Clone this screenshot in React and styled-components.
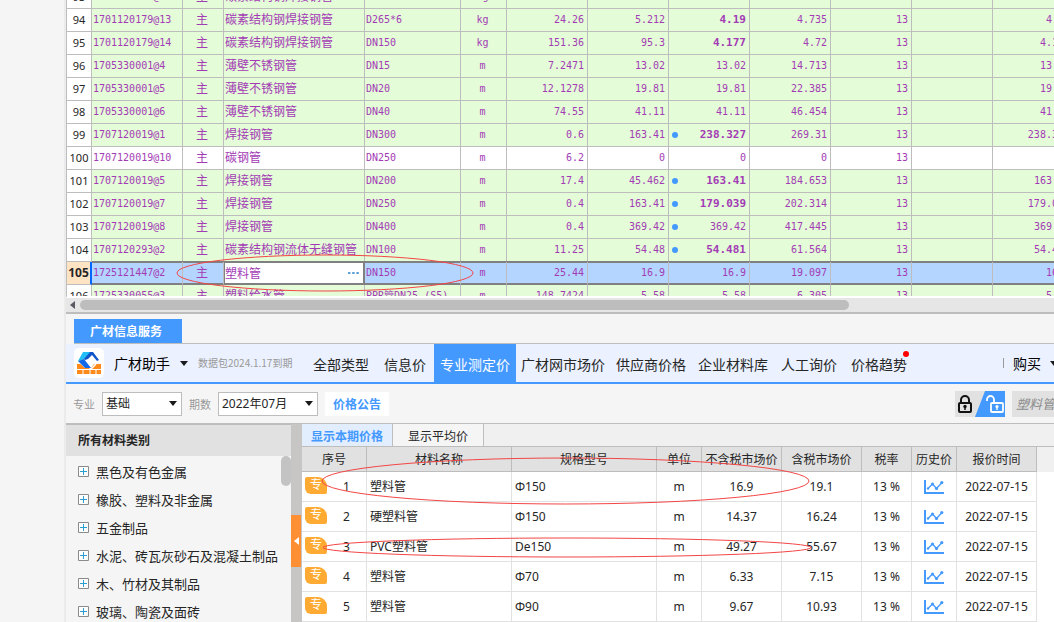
import { useState } from 'react'
import styled, { createGlobalStyle, ThemeProvider, css } from 'styled-components'

const theme = {
  color: {
    blue: '#4499ff',
    line: '#bdbdbd',
    lightLine: '#e1e1e1',
    page: '#f5f5f5',
    panel: '#e1e1e1',
    header: '#ebf1ff',
    green: '#e4fdd8',
    selected: '#b3d5ff',
    focus: '#808080',
    purple: '#a33bb5',
    orange: '#ff8f33',
    badge: '#ffaa33',
    text: '#262626',
    muted: '#999999',
    white: '#ffffff',
  },
  font: {
    ui: "'Noto Sans', 'Noto Sans CJK SC', sans-serif",
    cjk: "'Noto Sans CJK SC', sans-serif",
    mono: "'DejaVu Sans Mono', 'Noto Sans CJK SC', monospace",
  },
}

const GlobalStyle = createGlobalStyle`
  * {
    box-sizing: border-box;
  }

  body {
    margin: 0;
    overflow: hidden;
    font-family: ${theme.font.ui};
    font-size: 12px;
    color: ${theme.color.text};
    background: ${theme.color.page};
  }

  button, input, select {
    margin: 0;
    padding: 0;
    border: 0;
    border-radius: 0;
    background: none;
    font: inherit;
    color: inherit;
  }

  a {
    color: inherit;
    text-decoration: none;
  }
`

const Page = styled.div`
  display: flex;
  height: 100vh;
`

const Gutter = styled.aside`
  flex: 0 0 66px;
  border-right: 2px solid #ebebeb;
`

const Main = styled.main`
  flex: 1;
  min-width: 0;
  display: flex;
  flex-direction: column;
`

/* material sheet */

const SheetPane = styled.section`
  flex: 0 0 314px;
  min-height: 0;
  display: flex;
  flex-direction: column;
  overflow: hidden;
  border-bottom: 2px solid ${({ theme }) => theme.color.line};
`

const SheetView = styled.div`
  flex: 1 1 0;
  min-height: 0;
  overflow: hidden;
  border-left: 1px solid ${({ theme }) => theme.color.line};
  border-bottom: 2px solid ${({ theme }) => theme.color.white};
`

const Sheet = styled.table`
  width: 1007px;
  margin-top: -14px;
  table-layout: fixed;
  border-collapse: separate;
  border-spacing: 0;
`

const SheetRow = styled.tr`
  background: ${({ theme, $plain }) =>
    $plain ? theme.color.white : theme.color.green};

  ${({ theme, $selected }) =>
    $selected &&
    css`
      background: ${theme.color.selected};

      td {
        border-bottom-color: ${theme.color.focus};
        box-shadow: 0 -1px 0 ${theme.color.focus},
          inset 0 1px 0 ${theme.color.focus},
          inset 0 -1px 0 ${theme.color.focus};
      }
    `}
`

const RowHead = styled.th`
  height: 23px;
  padding: 0;
  border-right: 1px solid ${({ theme }) => theme.color.line};
  border-bottom: 1px solid ${({ theme }) => theme.color.line};
  background: ${({ theme }) => theme.color.white};
  font-size: 11px;
  line-height: 20px;
  font-weight: 400;

  ${({ $selected }) =>
    $selected &&
    css`
      border-right: 2px solid #0066ff;
      background: #ffe4c4;
      font-size: 12px;
      font-weight: 700;
    `}
`

const SheetCell = styled.td`
  height: 23px;
  padding: ${({ $cjk }) => ($cjk ? '0 3px 2px 1px' : '0 3px 0 1px')};
  overflow: hidden;
  border-right: 1px solid ${({ theme }) => theme.color.line};
  border-bottom: 1px solid ${({ theme }) => theme.color.line};
  color: ${({ theme }) => theme.color.purple};
  font-family: ${({ theme, $cjk }) => ($cjk ? theme.font.cjk : theme.font.mono)};
  font-size: ${({ $cjk }) => ($cjk ? '12px' : '10px')};
  line-height: 20px;
  text-align: ${({ $align }) => $align || 'left'};
  white-space: nowrap;
`

const Price = styled.div`
  display: flex;
  align-items: center;
  justify-content: space-between;
  padding-left: 2px;
`

const PriceValue = styled.span`
  margin-left: auto;
  font-size: ${({ $bold }) => ($bold ? '11px' : '10px')};
  font-weight: ${({ $bold }) => ($bold ? 700 : 400)};
`

const PriceDot = styled.i`
  width: 6px;
  height: 6px;
  border-radius: 50%;
  background: ${({ theme }) => theme.color.blue};
`

const EditCell = styled(SheetCell)`
  padding: 0;
  border-right-color: ${({ theme }) => theme.color.focus};
`

const Editor = styled.div`
  display: flex;
  align-items: center;
  height: 22px;
  padding: 0 4px 0 0;
  border: 1px solid ${({ theme }) => theme.color.focus};
  background: ${({ theme }) => theme.color.white};

  input {
    flex: 1;
    min-width: 0;
    height: 18px;
    outline: none;
  }

  button {
    display: flex;
  }
`

const ScrollTrack = styled.div`
  flex: 0 0 14px;
  display: flex;
  align-items: center;
  gap: 5px;
  padding-left: 4px;
  background: #e6e6e6;
`

const ScrollArea = styled.div`
  flex: 1;
`

const ScrollThumb = styled.div`
  width: 79%;
  height: 10px;
  border-radius: 5px;
  background: ${({ theme }) => theme.color.line};
`

/* price service */

const ServicePane = styled.section`
  flex: 1;
  min-height: 0;
  display: flex;
  flex-direction: column;
`

const TabStrip = styled.div`
  flex: none;
  display: flex;
  align-items: flex-end;
  height: 30px;
  margin-left: 8px;
  border-bottom: 1px solid ${({ theme }) => theme.color.line};
`

const ServiceTab = styled.button`
  height: 24px;
  padding: 0 20px 0 16px;
  background: ${({ theme }) => theme.color.blue};
  color: ${({ theme }) => theme.color.white};
  font-weight: 700;
`

const Header = styled.header`
  flex: none;
  display: flex;
  align-items: center;
  height: 40px;
  padding-left: 8px;
  border-bottom: 2px solid ${({ theme }) => theme.color.blue};
  background: ${({ theme }) => theme.color.header};
  white-space: nowrap;
`

const Brand = styled.button`
  display: flex;
  align-items: center;
  gap: 10px;
  color: #000;
  font-family: ${({ theme }) => theme.font.cjk};
  font-size: 14px;
`

const Expiry = styled.span`
  width: 108px;
  padding: 0 0 2px 10px;
  color: ${({ theme }) => theme.color.muted};
  font-family: ${({ theme }) => theme.font.cjk};
  font-size: 10px;
`

const Nav = styled.nav`
  display: flex;
  align-self: stretch;
  margin-left: 10px;
`

const NavLink = styled.a`
  position: relative;
  display: flex;
  align-items: center;
  justify-content: center;
  width: ${({ $chars }) => $chars * 12 + 22}px;
  padding-top: 2px;
  font-family: ${({ theme }) => theme.font.cjk};
  font-size: 14px;

  ${({ theme, $active }) =>
    $active &&
    css`
      background: ${theme.color.blue};
      color: ${theme.color.white};
    `}
`

const NewDot = styled.i`
  position: absolute;
  top: 7px;
  right: 5px;
  width: 6px;
  height: 6px;
  border-radius: 50%;
  background: #ff0000;
`

const Buy = styled.button`
  flex: none;
  display: flex;
  align-items: center;
  gap: 9px;
  margin-left: auto;
  margin-right: -4px;
  color: #000;
  font-family: ${({ theme }) => theme.font.cjk};
  font-size: 14px;

  &::before {
    content: '';
    height: 10px;
    border-left: 1px solid ${({ theme }) => theme.color.muted};
  }
`

const Filters = styled.div`
  flex: none;
  display: flex;
  align-items: center;
  height: 39px;
  padding-left: 7px;
`

const FilterLabel = styled.label`
  width: 29px;
  color: ${({ theme }) => theme.color.muted};
  font-size: 11px;
`

const SelectBox = styled.span`
  display: grid;
  align-items: center;
  width: ${({ $width }) => $width}px;
  height: 24px;
  margin-right: 7px;
  border: 1px solid ${({ theme }) => theme.color.line};
  background: ${({ theme }) => theme.color.white};

  select {
    grid-area: 1 / 1;
    height: 22px;
    padding-left: 3px;
    appearance: none;
    outline: none;
  }

  svg {
    grid-area: 1 / 1;
    justify-self: end;
    margin-right: 4px;
    pointer-events: none;
  }
`

const NoticeButton = styled.button`
  height: 24px;
  padding: 0 8px;
  background: ${({ theme }) => theme.color.white};
  color: ${({ theme }) => theme.color.blue};
  font-weight: 700;
`

const LockSwitch = styled.button`
  display: flex;
  margin: 0 7px 0 auto;
`

const Search = styled.input`
  width: 42px;
  height: 26px;
  padding-left: 4px;
  background: ${({ theme }) => theme.color.panel};
  font-size: 13px;
  font-style: italic;

  &::placeholder {
    color: #8c8c8c;
    opacity: 1;
  }
`

const Workspace = styled.div`
  flex: 1;
  min-height: 0;
  display: flex;
  border-top: 1px solid ${({ theme }) => theme.color.line};
  overflow: hidden;
`

const Sidebar = styled.aside`
  flex: 0 0 225px;
  display: flex;
  flex-direction: column;
  border-top: 1px solid ${({ theme }) => theme.color.line};
`

const SidebarTitle = styled.h2`
  flex: none;
  margin: 0;
  padding-left: 12px;
  background: ${({ theme }) => theme.color.panel};
  font-size: 12px;
  line-height: 31px;
`

const SidebarBody = styled.div`
  display: flex;
  justify-content: space-between;
`

const Tree = styled.ul`
  margin: 0;
  padding: 1px 0 0 12px;
  list-style: none;
`

const TreeItem = styled.li`
  button {
    display: flex;
    align-items: center;
    gap: 7px;
    height: 28px;
    font-size: 13px;
    white-space: nowrap;
  }
`

const SidebarThumb = styled.div`
  width: 10px;
  height: 30px;
  border-radius: 5px;
  background: #c3c3c3;
`

const Splitter = styled.div`
  flex: 0 0 11px;
  display: flex;
  align-items: center;
  background: #c8c6c4;
`

const Collapse = styled.button`
  display: flex;
  align-items: center;
  justify-content: center;
  width: 10px;
  height: 52px;
  margin-top: 36px;
  background: ${({ theme }) => theme.color.orange};
`

const Results = styled.div`
  flex: 1;
  min-width: 0;
  display: flex;
  flex-direction: column;
  background: ${({ theme }) => theme.color.white};
`

const ResultTabs = styled.div`
  flex: none;
  display: flex;
  height: 23px;
  border-bottom: 1px solid ${({ theme }) => theme.color.line};
  background: #f0f0f0;
`

const ResultTab = styled.button`
  width: 91px;
  padding-top: 1px;
  border-right: 1px solid ${({ theme }) => theme.color.line};
  background: ${({ theme, $active }) => ($active ? '#e2eefe' : theme.color.page)};
  color: ${({ theme, $active }) => ($active ? theme.color.blue : 'inherit')};
  font-weight: ${({ $active }) => ($active ? 700 : 400)};
`

const PriceArea = styled.div`
  background: linear-gradient(#f0f0f0 25px, #ffffff 25px);
`

const PriceTable = styled.table`
  width: 735px;
  table-layout: fixed;
  border-collapse: separate;
  border-spacing: 0;
  white-space: nowrap;

  th {
    height: 25px;
    padding: 2px 0 0;
    border-right: 1px solid ${({ theme }) => theme.color.line};
    border-bottom: 1px solid ${({ theme }) => theme.color.line};
    background: ${({ theme }) => theme.color.panel};
    font-weight: 400;
    line-height: 20px;
  }

  td {
    height: 30px;
    padding: 0 3px;
    border-right: 1px solid ${({ theme }) => theme.color.lightLine};
    border-bottom: 1px solid ${({ theme }) => theme.color.lightLine};
    background: ${({ theme }) => theme.color.white};
    line-height: 20px;
    text-align: center;
  }
`

const TextCell = styled.td`
  && {
    text-align: left;
  }
`

const OrderCell = styled.td`
  && {
    padding: 0 0 0 3px;
  }
`

const Order = styled.div`
  display: flex;
  align-items: center;
`

const OrderNumber = styled.span`
  flex: 1;
`

const Badge = styled.span`
  width: 22px;
  height: 17px;
  margin-bottom: 3px;
  border-radius: 2px 9px 2px 6px;
  background: ${({ theme }) => theme.color.badge};
  color: ${({ theme }) => theme.color.white};
  font-size: 12px;
  line-height: 16px;
`

const IconButton = styled.button`
  display: inline-flex;
  vertical-align: middle;
`

const Marks = styled.svg`
  position: absolute;
  top: 0;
  left: 0;
  pointer-events: none;
`

const sheetCols = [25, 91, 41, 141, 96, 46, 81, 81, 81, 81, 81, 81, 81]

const sheetRows = [
  { no: 93, code: '1701120179@12', name: '碳素结构钢焊接钢管', spec: 'DN100', unit: 'kg', qty: '3.2', budget: '5.2', price: '4.19', taxed: '4.735' },
  { no: 94, code: '1701120179@13', name: '碳素结构钢焊接钢管', spec: 'D265*6', unit: 'kg', qty: '24.26', budget: '5.212', price: '4.19', taxed: '4.735', bold: true },
  { no: 95, code: '1701120179@14', name: '碳素结构钢焊接钢管', spec: 'DN150', unit: 'kg', qty: '151.36', budget: '95.3', price: '4.177', taxed: '4.72', bold: true },
  { no: 96, code: '1705330001@4', name: '薄壁不锈钢管', spec: 'DN15', unit: 'm', qty: '7.2471', budget: '13.02', price: '13.02', taxed: '14.713' },
  { no: 97, code: '1705330001@5', name: '薄壁不锈钢管', spec: 'DN20', unit: 'm', qty: '12.1278', budget: '19.81', price: '19.81', taxed: '22.385' },
  { no: 98, code: '1705330001@6', name: '薄壁不锈钢管', spec: 'DN40', unit: 'm', qty: '74.55', budget: '41.11', price: '41.11', taxed: '46.454' },
  { no: 99, code: '1707120019@1', name: '焊接钢管', spec: 'DN300', unit: 'm', qty: '0.6', budget: '163.41', price: '238.327', taxed: '269.31', bold: true, dot: true },
  { no: 100, code: '1707120019@10', name: '碳钢管', spec: 'DN250', unit: 'm', qty: '6.2', budget: '0', price: '0', taxed: '0', plain: true },
  { no: 101, code: '1707120019@5', name: '焊接钢管', spec: 'DN200', unit: 'm', qty: '17.4', budget: '45.462', price: '163.41', taxed: '184.653', bold: true, dot: true },
  { no: 102, code: '1707120019@7', name: '焊接钢管', spec: 'DN250', unit: 'm', qty: '0.4', budget: '163.41', price: '179.039', taxed: '202.314', bold: true, dot: true },
  { no: 103, code: '1707120019@8', name: '焊接钢管', spec: 'DN400', unit: 'm', qty: '0.4', budget: '369.42', price: '369.42', taxed: '417.445', dot: true },
  { no: 104, code: '1707120293@2', name: '碳素结构钢流体无缝钢管', spec: 'DN100', unit: 'm', qty: '11.25', budget: '54.48', price: '54.481', taxed: '61.564', bold: true, dot: true },
  { no: 105, code: '1725121447@2', name: '塑料管', spec: 'DN150', unit: 'm', qty: '25.44', budget: '16.9', price: '16.9', taxed: '19.097', selected: true },
  { no: 106, code: '1725330055@3', name: '塑料给水管', spec: 'PPR管DN25 (S5)', unit: 'm', qty: '148.7424', budget: '5.58', price: '5.58', taxed: '6.305' },
]

const navItems = [
  '全部类型',
  '信息价',
  '专业测定价',
  '广材网市场价',
  '供应商价格',
  '企业材料库',
  '人工询价',
  '价格趋势',
]

const categories = [
  '黑色及有色金属',
  '橡胶、塑料及非金属',
  '五金制品',
  '水泥、砖瓦灰砂石及混凝土制品',
  '木、竹材及其制品',
  '玻璃、陶瓷及面砖',
]

const priceCols = [
  ['序号', 65],
  ['材料名称', 145],
  ['规格型号', 145],
  ['单位', 45],
  ['不含税市场价', 80],
  ['含税市场价', 80],
  ['税率', 50],
  ['历史价', 45],
  ['报价时间', 80],
]

const prices = [
  ['塑料管', 'Φ150', '16.9', '19.1'],
  ['硬塑料管', 'Φ150', '14.37', '16.24'],
  ['PVC塑料管', 'De150', '49.27', '55.67'],
  ['塑料管', 'Φ70', '6.33', '7.15'],
  ['塑料管', 'Φ90', '9.67', '10.93'],
]

const Caret = () => (
  <svg width='8' height='5' viewBox='0 0 8 5'>
    <path d='M0 0h8L4 5z' fill='#1a1a1a' />
  </svg>
)

const LeftArrow = ({ width, height, color }) => (
  <svg width={width} height={height} viewBox='0 0 5 8' preserveAspectRatio='none'>
    <path d='M5 0v8L0 4z' fill={color} />
  </svg>
)

const Logo = () => (
  <svg width='30' height='30' viewBox='0 0 30 30'>
    <rect width='30' height='30' rx='5' fill='#fff' />
    <path d='M3 16h24v10H3z' fill='#ff8a1c' />
    <path d='M3 21.5h24M9 21.5V26M16 16v10M22 21.5V26' stroke='#fff' strokeWidth='1' />
    <path d='M7 10l12 0 1 6-3 4h-6l-7-6z' fill='#fff' />
    <path d='M14 17l3 4 5-5' fill='none' stroke='#fff' strokeWidth='1.5' />
    <path d='M9 4h8l-6 7-7 2z' fill='#23bdf7' />
    <path d='M4 13l6-2 7 9h-6z' fill='#1269e8' />
    <path d='M16 4h3l6 8-2 1-5-6-4 4-3 1-1-1z' fill='#0f55c9' />
  </svg>
)

const LockIcons = () => (
  <svg width='50' height='26' viewBox='0 0 50 26'>
    <path d='M0 0h50v26H0z' fill='#e1e1e1' />
    <path d='M30 0h20v26H20z' fill='#4499ff' />
    <g fill='none' stroke='#111' strokeWidth='2'>
      <rect x='4' y='12' width='12' height='9' rx='1' />
      <path d='M6 12V9a4 4 0 0 1 8 0v3' />
    </g>
    <circle cx='10' cy='15.5' r='1.7' fill='#111' />
    <path d='M10 16v3' stroke='#111' strokeWidth='1.5' />
    <g fill='none' stroke='#fff' strokeWidth='1.8'>
      <rect x='36' y='12' width='12' height='9' rx='1' />
      <path d='M32 10V8.5a3.5 3.5 0 0 1 7 0V12' />
    </g>
    <circle cx='42' cy='15.5' r='1.6' fill='#fff' />
    <path d='M42 16v3' stroke='#fff' strokeWidth='1.4' />
  </svg>
)

const ExpandIcon = () => (
  <svg width='11' height='11' viewBox='0 0 11 11'>
    <path d='M.5.5h10v10H.5z' fill='#fff' stroke='#8a8a8a' />
    <path d='M2 5.5h7M5.5 2v7' stroke='#2b9fd0' />
  </svg>
)

const ChartIcon = () => (
  <svg width='20' height='14' viewBox='0 0 20 14'>
    <path d='M1 0v13h19' fill='none' stroke='#4499ff' strokeWidth='2' />
    <path d='M4 8.5l4.5-4.5 4 4.5L18 2.5' fill='none' stroke='#4499ff' strokeWidth='1.3' />
    <g fill='#4499ff'>
      <circle cx='4' cy='8.5' r='1.2' />
      <circle cx='8.5' cy='4' r='1.6' />
      <circle cx='12.5' cy='8.5' r='1.6' />
      <circle cx='17.8' cy='2.6' r='1.6' />
    </g>
  </svg>
)

const NameEditor = ({ name }) => {
  const [value, setValue] = useState(name)

  return (
    <EditCell $cjk>
      <Editor>
        <input
          aria-label='材料名称'
          value={value}
          onChange={(e) => setValue(e.target.value)}
        />
        <button aria-label='选择材料'>
          <svg width='11' height='2' viewBox='0 0 11 2'>
            <path d='M0 0h2.4v2H0zM4.2 0h2.4v2H4.2zM8.4 0h2.4v2H8.4z' fill='#5aa0d6' />
          </svg>
        </button>
      </Editor>
    </EditCell>
  )
}

const MaterialSheet = () => (
  <SheetPane>
    <SheetView>
      <Sheet>
        <colgroup>
          {sheetCols.map((width, i) => (
            <col key={i} style={{ width }} />
          ))}
        </colgroup>
        <tbody>
          {sheetRows.map((row) => (
            <SheetRow key={row.no} $plain={row.plain} $selected={row.selected}>
              <RowHead scope='row' $selected={row.selected}>
                {row.no}
              </RowHead>
              <SheetCell>{row.code}</SheetCell>
              <SheetCell $cjk $align='center'>
                主
              </SheetCell>
              {row.selected ? (
                <NameEditor name={row.name} />
              ) : (
                <SheetCell $cjk>{row.name}</SheetCell>
              )}
              <SheetCell>{row.spec}</SheetCell>
              <SheetCell $align='center'>{row.unit}</SheetCell>
              <SheetCell $align='right'>{row.qty}</SheetCell>
              <SheetCell $align='right'>{row.budget}</SheetCell>
              <SheetCell>
                <Price>
                  {row.dot && <PriceDot />}
                  <PriceValue $bold={row.bold}>{row.price}</PriceValue>
                </Price>
              </SheetCell>
              <SheetCell $align='right'>{row.taxed}</SheetCell>
              <SheetCell $align='right'>13</SheetCell>
              <SheetCell />
              <SheetCell $align='right'>{row.price}</SheetCell>
            </SheetRow>
          ))}
        </tbody>
      </Sheet>
    </SheetView>
    <ScrollTrack>
      <LeftArrow width={5} height={8} color='#5a5a64' />
      <ScrollArea>
        <ScrollThumb />
      </ScrollArea>
    </ScrollTrack>
  </SheetPane>
)

const PriceResults = () => (
  <Results>
    <ResultTabs>
      <ResultTab $active>显示本期价格</ResultTab>
      <ResultTab>显示平均价</ResultTab>
    </ResultTabs>
    <PriceArea>
      <PriceTable>
        <colgroup>
          {priceCols.map(([title, width]) => (
            <col key={title} style={{ width }} />
          ))}
        </colgroup>
        <thead>
          <tr>
            {priceCols.map(([title]) => (
              <th key={title}>{title}</th>
            ))}
          </tr>
        </thead>
        <tbody>
          {prices.map(([name, spec, price, taxed], i) => (
            <tr key={i}>
              <OrderCell>
                <Order>
                  <Badge>专</Badge>
                  <OrderNumber>{i + 1}</OrderNumber>
                </Order>
              </OrderCell>
              <TextCell>{name}</TextCell>
              <TextCell>{spec}</TextCell>
              <td>m</td>
              <td>{price}</td>
              <td>{taxed}</td>
              <td>13 %</td>
              <td>
                <IconButton aria-label='历史价'>
                  <ChartIcon />
                </IconButton>
              </td>
              <td>2022-07-15</td>
            </tr>
          ))}
        </tbody>
      </PriceTable>
    </PriceArea>
  </Results>
)

const PriceService = () => (
  <ServicePane>
    <TabStrip>
      <ServiceTab>广材信息服务</ServiceTab>
    </TabStrip>
    <Header>
      <Brand>
        <Logo />
        广材助手
        <Caret />
      </Brand>
      <Expiry>数据包2024.1.17到期</Expiry>
      <Nav>
        {navItems.map((item) => (
          <NavLink
            key={item}
            href='#'
            $chars={item.length}
            $active={item === '专业测定价'}
          >
            {item}
            {item === '价格趋势' && <NewDot />}
          </NavLink>
        ))}
      </Nav>
      <Buy>
        购买
        <Caret />
      </Buy>
    </Header>
    <Filters>
      <FilterLabel htmlFor='major'>专业</FilterLabel>
      <SelectBox $width={80}>
        <select id='major'>
          <option>基础</option>
        </select>
        <Caret />
      </SelectBox>
      <FilterLabel htmlFor='period'>期数</FilterLabel>
      <SelectBox $width={100}>
        <select id='period'>
          <option>2022年07月</option>
        </select>
        <Caret />
      </SelectBox>
      <NoticeButton>价格公告</NoticeButton>
      <LockSwitch aria-label='锁定'>
        <LockIcons />
      </LockSwitch>
      <Search aria-label='搜索材料' placeholder='塑料管' />
    </Filters>
    <Workspace>
      <Sidebar>
        <SidebarTitle>所有材料类别</SidebarTitle>
        <SidebarBody>
          <Tree>
            {categories.map((item) => (
              <TreeItem key={item}>
                <button>
                  <ExpandIcon />
                  {item}
                </button>
              </TreeItem>
            ))}
          </Tree>
          <SidebarThumb />
        </SidebarBody>
      </Sidebar>
      <Splitter>
        <Collapse aria-label='收起'>
          <LeftArrow width={5} height={8} color='#fff' />
        </Collapse>
      </Splitter>
      <PriceResults />
    </Workspace>
  </ServicePane>
)

const App = () => {
  return (
    <ThemeProvider theme={theme}>
      <GlobalStyle />
      <Page>
        <Gutter />
        <Main>
          <MaterialSheet />
          <PriceService />
        </Main>
      </Page>
      {/* red pen circles */}
      <Marks width='1054' height='622' fill='none' stroke='#f44545'>
        <ellipse cx='325' cy='273' rx='148' ry='18' />
        <ellipse cx='565.5' cy='481' rx='243.5' ry='23' />
        <ellipse cx='567' cy='547.5' rx='244' ry='9.5' />
      </Marks>
    </ThemeProvider>
  )
}

export default App
